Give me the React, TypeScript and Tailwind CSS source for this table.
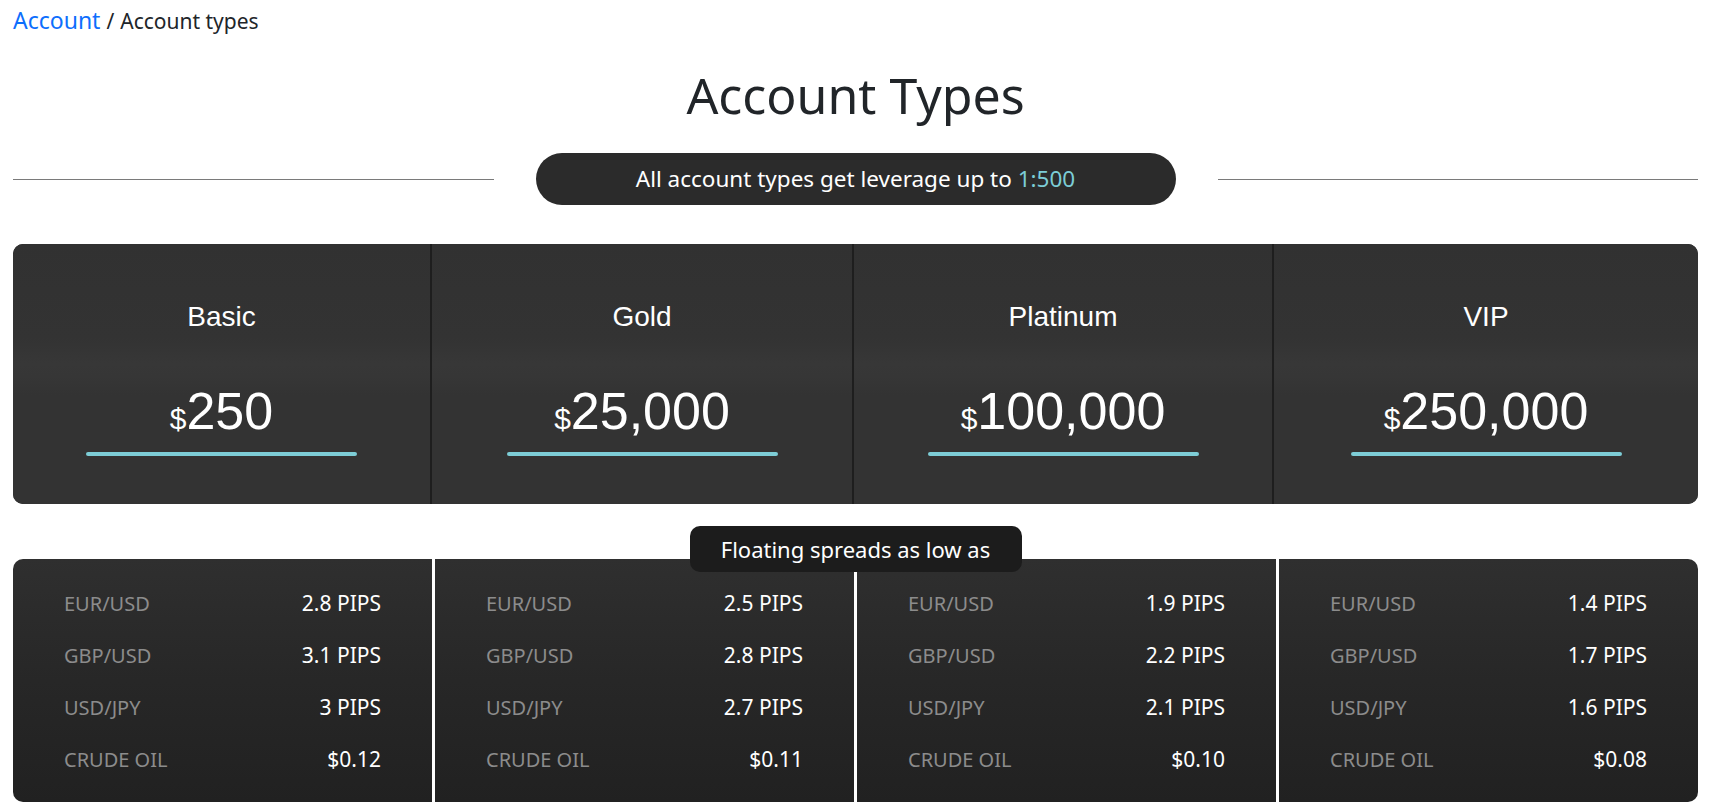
import React from "react";

type Plan = {
  name: string;
  deposit: string;
  spreads: { label: string; value: string }[];
};

const plans: Plan[] = [
  {
    name: "Basic",
    deposit: "250",
    spreads: [
      { label: "EUR/USD", value: "2.8 PIPS" },
      { label: "GBP/USD", value: "3.1 PIPS" },
      { label: "USD/JPY", value: "3 PIPS" },
      { label: "CRUDE OIL", value: "$0.12" },
    ],
  },
  {
    name: "Gold",
    deposit: "25,000",
    spreads: [
      { label: "EUR/USD", value: "2.5 PIPS" },
      { label: "GBP/USD", value: "2.8 PIPS" },
      { label: "USD/JPY", value: "2.7 PIPS" },
      { label: "CRUDE OIL", value: "$0.11" },
    ],
  },
  {
    name: "Platinum",
    deposit: "100,000",
    spreads: [
      { label: "EUR/USD", value: "1.9 PIPS" },
      { label: "GBP/USD", value: "2.2 PIPS" },
      { label: "USD/JPY", value: "2.1 PIPS" },
      { label: "CRUDE OIL", value: "$0.10" },
    ],
  },
  {
    name: "VIP",
    deposit: "250,000",
    spreads: [
      { label: "EUR/USD", value: "1.4 PIPS" },
      { label: "GBP/USD", value: "1.7 PIPS" },
      { label: "USD/JPY", value: "1.6 PIPS" },
      { label: "CRUDE OIL", value: "$0.08" },
    ],
  },
];

// deposit card column
function PlanHeader({ plan }: { plan: Plan }) {
  return (
    <div className="flex flex-col items-center pt-[59px] bg-[linear-gradient(180deg,#313131_0%,#333333_36%,#373737_46%,#363636_51%,#333333_58%,#333333_100%)]">
      <div className="font-['Liberation_Sans',Arial,sans-serif] text-[28px] leading-[28px] text-white">
        {plan.name}
      </div>
      <div className="mt-[54px] font-['Liberation_Sans',Arial,sans-serif] text-[52px] leading-[52px] text-white">
        <span className="text-[30px] leading-none">$</span>
        <span>{plan.deposit}</span>
      </div>
      <div className="mt-[15px] h-[4px] w-[271px] rounded-full bg-[#7dcdd6]" />
    </div>
  );
}

function PlanSpreads({ plan }: { plan: Plan }) {
  return (
    <div className="flex flex-col pt-[19px] px-[51px] bg-[linear-gradient(180deg,#2f2f2f_0%,#272727_50%,#212121_100%)]">
      {plan.spreads.map((row) => (
        <div key={row.label} className="flex h-[52px] items-center justify-between">
          <span className="text-[20px] leading-[52px] text-[#8c8c8c]">{row.label}</span>
          <span className="text-[21px] leading-[52px] -mt-[3px] text-white">{row.value}</span>
        </div>
      ))}
    </div>
  );
}

export default function App() {
  return (
    <div className="min-h-screen bg-white font-['Noto_Sans','Roboto',sans-serif]">
      <div className="ml-[13px] w-[1685px]">
        {/* breadcrumb */}
        <div className="pt-[6px] text-[21px] leading-[28px] text-[#212529]">
          <a className="text-[23px] text-[#0d6efd]">Account</a>
          <span className="px-[6px]">/</span>
          <span>Account types</span>
        </div>

        <h1 className="mt-[32px] text-center text-[50px] leading-[56px] text-[#212529]">
          Account Types
        </h1>

        <div className="mt-[30px] flex items-center gap-[42px]">
          <div className="h-px flex-1 bg-[#7a7a7a]" />
          <div className="flex h-[52px] w-[640px] items-center justify-center rounded-full bg-[#2b2b2b] text-[22.5px] text-white">
            All account types get leverage up to&nbsp;<span className="text-[#7ccdd6]">1:500</span>
          </div>
          <div className="h-px flex-1 bg-[#7a7a7a]" />
        </div>

        <div className="mt-[39px] grid h-[260px] grid-cols-[417px_420px_418px_1fr] gap-[2px] overflow-hidden rounded-[10px] bg-[#1e1e1e]">
          {plans.map((p) => (
            <PlanHeader key={p.name} plan={p} />
          ))}
        </div>

        <div className="relative z-10 mx-auto -mb-[13px] mt-[22px] flex h-[46px] w-[332px] items-center justify-center rounded-[10px] bg-[#1c1c1c] text-[22px] text-white">
          Floating spreads as low as
        </div>

        <div className="grid h-[243px] grid-cols-4 gap-[3px] overflow-hidden rounded-[10px] bg-white">
          {plans.map((p) => (
            <PlanSpreads key={p.name} plan={p} />
          ))}
        </div>
      </div>
    </div>
  );
}
